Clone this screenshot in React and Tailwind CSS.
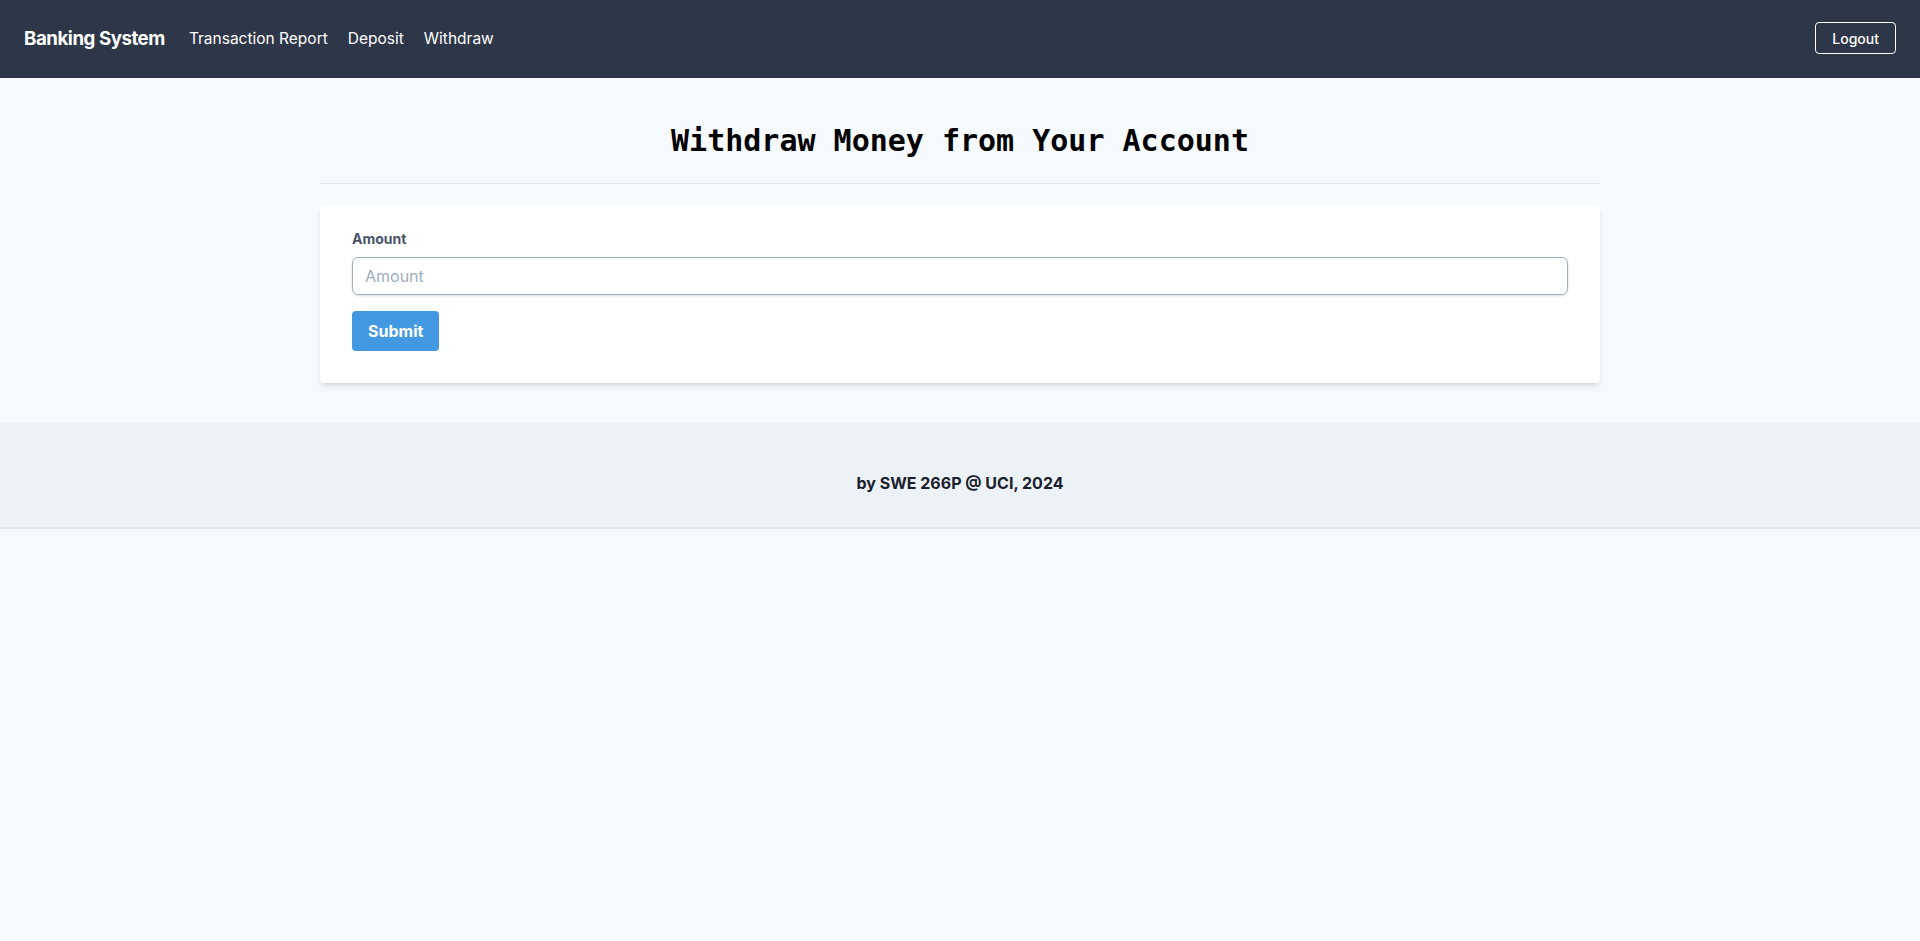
const navLinks = ['Transaction Report', 'Deposit', 'Withdraw'];

export default function App() {
  return (
    <div className="min-h-screen bg-[#f7fafc] font-['Inter','Liberation_Sans',sans-serif]">
      <nav className="flex h-[78px] items-center justify-between bg-[#2d3748] px-6 text-white">
        <div className="flex items-center">
          <span className="mr-6 text-[18.7px] font-bold tracking-tight">Banking System</span>
          <div className="flex items-center gap-5 text-[15.5px]">
            {navLinks.map((link) => (
              <a key={link} href="#" className="hover:text-gray-300">
                {link}
              </a>
            ))}
          </div>
        </div>
        <button className="mb-[2px] h-[32px] rounded border border-white px-4 text-[14px] font-medium">Logout</button>
      </nav>

      <main className="mx-auto w-[1280px]">
        <h1 className="mt-[45px] text-center font-['DejaVu_Sans_Mono',monospace] text-[30px] font-bold leading-9 text-black">
          Withdraw Money from Your Account
        </h1>
        <hr className="mt-6 border-[#e2e8f0]" />

        <form className="mt-[21px] rounded bg-white px-8 pt-6 pb-8 shadow-md">
          <div className="mb-4">
            <label className="mb-2 block text-sm font-bold text-[#4a5568]">Amount</label>
            <input
              type="text"
              placeholder="Amount"
              className="w-full appearance-none rounded-md border border-[#a0aec0] px-3 py-2 leading-tight text-[#4a5568] shadow-sm placeholder:text-[#a0aec0] focus:outline-none"
            />
          </div>
          <button type="button" className="rounded bg-[#4299e1] px-4 py-2 font-bold text-white hover:bg-[#2b6cb0]">
            Submit
          </button>
        </form>
      </main>

      <footer className="mt-10 border-b-2 border-[#e2e8f0] bg-[#edf2f7] pt-12 pb-8 text-center">
        <p className="text-[16px] font-bold text-[#1a202c]">by SWE 266P @ UCI, 2024</p>
      </footer>
    </div>
  );
}
